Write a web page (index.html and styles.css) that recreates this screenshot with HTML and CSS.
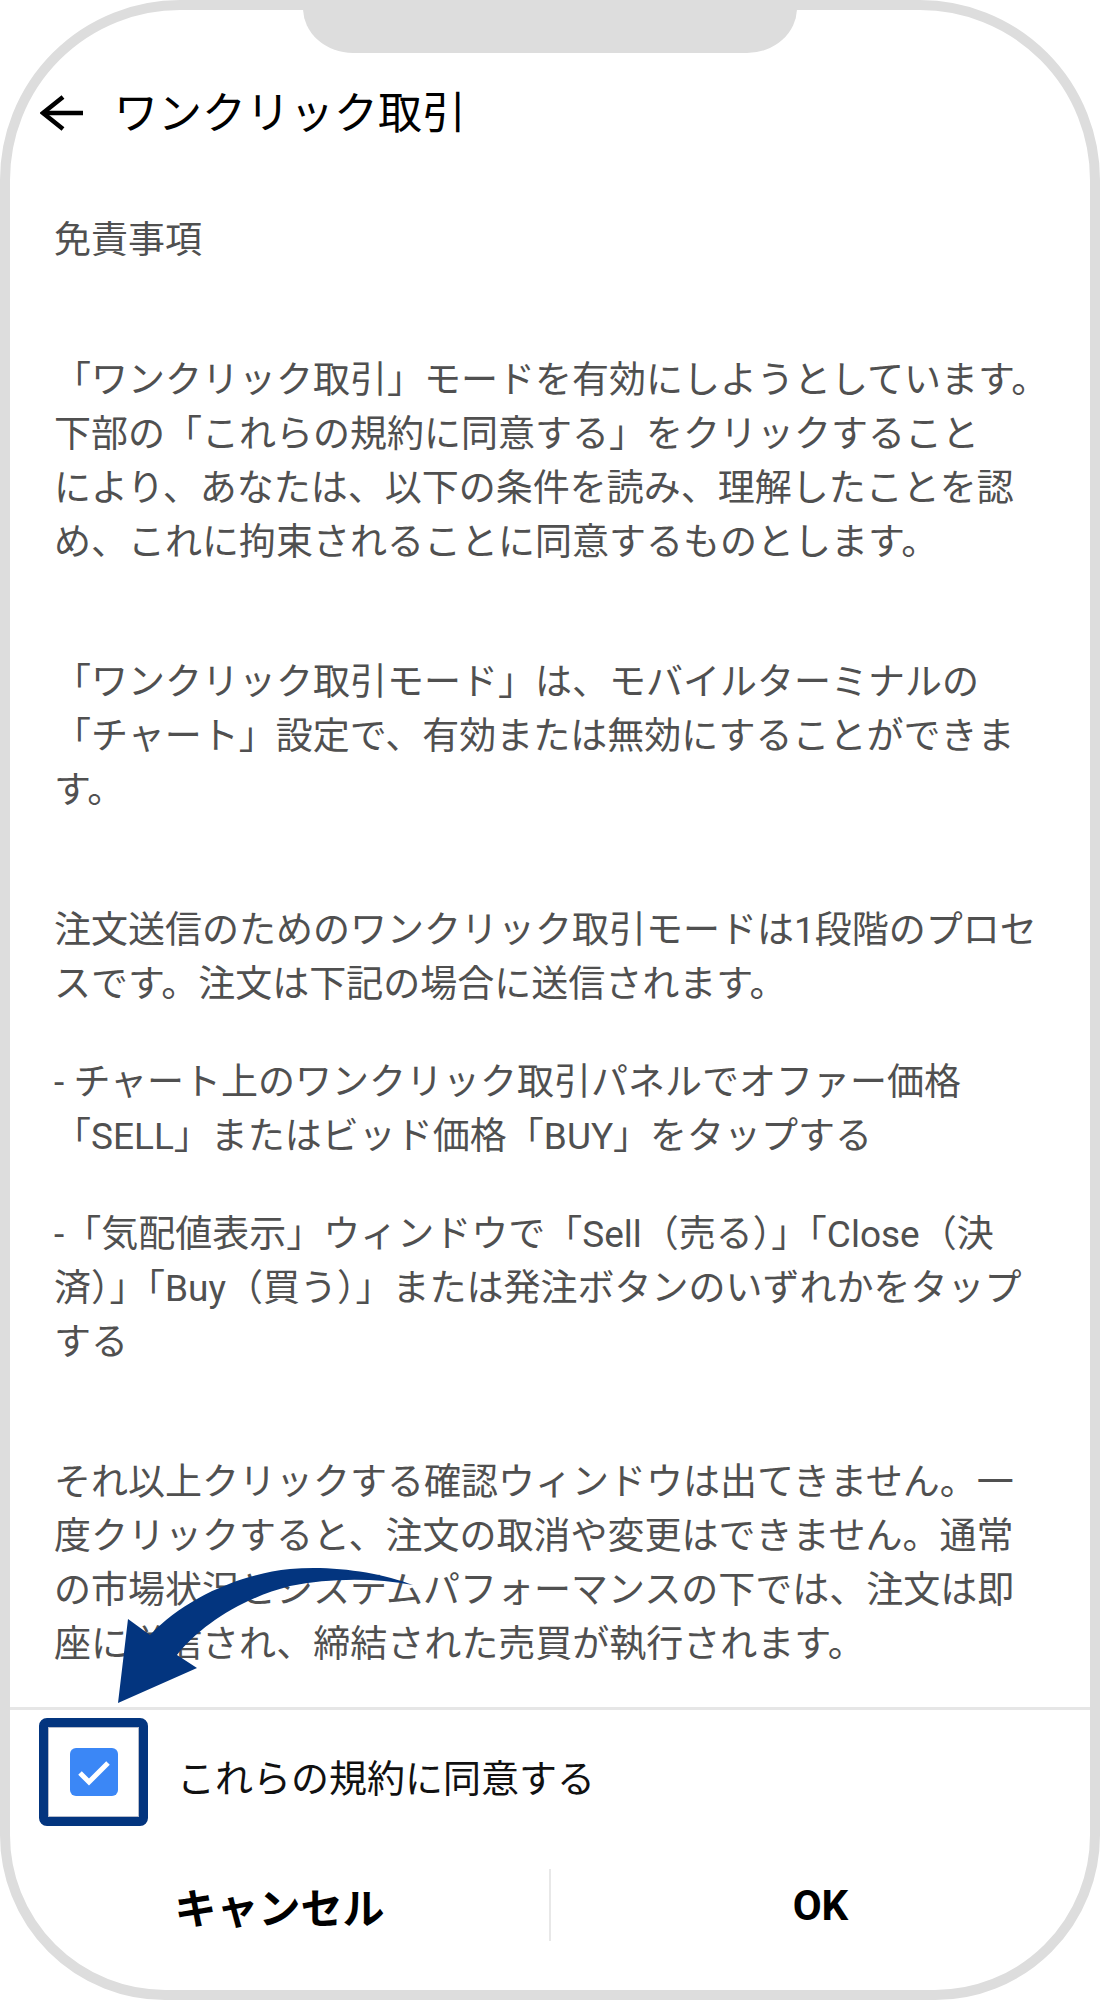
FILE: index.html
```html
<!DOCTYPE html>
<html lang="ja">
<head>
  <meta charset="UTF-8" />
  <meta name="viewport" content="width=device-width, initial-scale=1.0"/>
  <title>ワンクリック取引</title>
  <link rel="stylesheet" href="styles.css">
</head>
<body>
  <div class="phone">
    <div class="notch"></div>

    <header class="topbar">
      <svg class="back" width="46" height="40" viewBox="0 0 46 40">
        <polyline points="23,3 3,19 23,35" />
        <line x1="4" y1="19" x2="43" y2="19" />
      </svg>
      <h1>ワンクリック取引</h1>
    </header>

    <main class="terms">
      <p>免責事項</p>
      <p>「ワンクリック取引」モードを有効にしようとしています。<br>下部の「これらの規約に同意する」をクリックすること<br>により、あなたは、以下の条件を読み、理解したことを認<br>め、これに拘束されることに同意するものとします。</p>
      <p>「ワンクリック取引モード」は、モバイルターミナルの<br>「チャート」設定で、有効または無効にすることができま<br>す。</p>
      <p>注文送信のためのワンクリック取引モードは1段階のプロセ<br>スです。注文は下記の場合に送信されます。</p>
      <p class="near">- チャート上のワンクリック取引パネルでオファー価格<br>「SELL」またはビッド価格「BUY」をタップする</p>
      <p class="near">-「気配値表示」ウィンドウで「Sell（売る）」「Close（決<br>済）」「Buy（買う）」または発注ボタンのいずれかをタップ<br>する</p>
      <p>それ以上クリックする確認ウィンドウは出てきません。一<br>度クリックすると、注文の取消や変更はできません。通常<br>の市場状況とシステムパフォーマンスの下では、注文は即<br>座に送信され、締結された売買が執行されます。</p>
    </main>

    <footer class="actions">
      <label class="agree">
        <span class="highlight">
          <span class="check">
            <svg width="48" height="48" viewBox="0 0 48 48">
              <polyline points="10,25 19,34 38,15" />
            </svg>
          </span>
        </span>
        <span class="agree-text">これらの規約に同意する</span>
      </label>
      <div class="buttons">
        <button type="button">キャンセル</button>
        <span class="sep"></span>
        <button type="button">OK</button>
      </div>
    </footer>

    <!-- flèche d'annotation -->
    <svg class="pointer" width="330" height="160" viewBox="100 1560 330 160">
      <path d="M413,1585 C380,1572 330,1565 290,1569 C240,1574 185,1598 150,1635 L128,1619 L118,1703 L197,1668 L177,1655 C200,1626 240,1599 290,1586 C330,1578 375,1578 413,1585 Z" />
    </svg>
  </div>
</body>
</html>
```

FILE: styles.css
```css
body {
  margin: 0;
  background: #fff;
  font-family: Roboto, "Noto Sans CJK JP", sans-serif;
}
.phone {
  position: relative;
  width: 1100px;
  height: 2000px;
  box-sizing: border-box;
  border: 10px solid #dddddd;
  border-radius: 180px 180px 165px 165px;
  overflow: hidden;
  display: flex;
  flex-direction: column;
  background: #fff;
}
.notch {
  position: absolute;
  top: -10px;
  left: 293px;
  width: 494px;
  height: 53px;
  background: #dddddd;
  border-radius: 0 0 50px 50px / 0 0 45px 45px;
}
.topbar {
  display: flex;
  align-items: center;
  height: 60px;
  margin-top: 74px;
  padding-left: 30px;
}
.back polyline, .back line {
  fill: none;
  stroke: #000;
  stroke-width: 4.5;
}
.topbar h1 {
  margin: 0 0 0 28px;
  font-size: 44px;
  font-weight: 400;
  line-height: 60px;
  color: #000;
}
.terms {
  flex: 1;
  overflow: hidden;
  padding: 70px 20px 0 44px;
  font-size: 37px;
  line-height: 54px;
  color: #505050;
}
.terms p {
  margin: 0;
  white-space: nowrap;
}
.terms p + p {
  margin-top: 86px;
}
.terms p.near {
  margin-top: 44px;
}
.actions {
  border-top: 3px solid #e6e6e6;
  padding-bottom: 37px;
}
.agree {
  display: flex;
  align-items: center;
  padding: 8px 0 0 29px;
}
.highlight {
  width: 109px;
  height: 108px;
  box-sizing: border-box;
  border: 9px solid #03357f;
  border-radius: 8px;
  box-shadow: inset 0 0 0 1px #b6bccb;
  display: flex;
  align-items: center;
  justify-content: center;
}
.check {
  width: 48px;
  height: 48px;
  border-radius: 6px;
  background: #3b87f6;
  display: flex;
}
.check polyline {
  fill: none;
  stroke: #fff;
  stroke-width: 5;
}
.agree-text {
  margin: 6px 0 0 29px;
  font-size: 38px;
  color: #111;
}
.buttons {
  display: flex;
  align-items: center;
  height: 96px;
  margin-top: 31px;
}
.buttons button {
  flex: 1;
  height: 100%;
  border: none;
  background: none;
  font-family: inherit;
  font-size: 42px;
  font-weight: bold;
  color: #000;
  padding: 0;
}
.sep {
  width: 2px;
  height: 72px;
  background: #e8e8e8;
}
.pointer {
  position: absolute;
  left: 90px;
  top: 1550px;
}
.pointer path {
  fill: #03357f;
}
```
